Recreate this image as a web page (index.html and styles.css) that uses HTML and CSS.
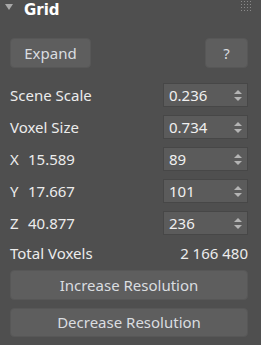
FILE: index.html
```html
<!DOCTYPE html>
<html lang="en">
  <head>
    <meta charset="UTF-8" />
    <title>Grid</title>
    <link rel="stylesheet" href="styles.css">
  </head>
  <body>
    <div class="panel">
      <div class="header">
        <span class="caret"></span>
        <span class="title">Grid</span>
        <svg class="grip" width="10" height="10" viewBox="0 0 10 10">
          <g fill="#8a8a8a">
            <rect x="0" y="0" width="1" height="1"/><rect x="3" y="0" width="1" height="1"/><rect x="6" y="0" width="1" height="1"/><rect x="9" y="0" width="1" height="1"/>
            <rect x="0" y="3" width="1" height="1"/><rect x="3" y="3" width="1" height="1"/><rect x="6" y="3" width="1" height="1"/><rect x="9" y="3" width="1" height="1"/>
            <rect x="0" y="6" width="1" height="1"/><rect x="3" y="6" width="1" height="1"/><rect x="6" y="6" width="1" height="1"/><rect x="9" y="6" width="1" height="1"/>
            <rect x="0" y="9" width="1" height="1"/><rect x="3" y="9" width="1" height="1"/><rect x="6" y="9" width="1" height="1"/><rect x="9" y="9" width="1" height="1"/>
          </g>
        </svg>
      </div>

      <div class="toolbar">
        <button class="btn expand">Expand</button>
        <button class="btn help">?</button>
      </div>

      <div class="row">
        <span class="label">Scene Scale</span>
        <div class="spin"><span>0.236</span><i class="arrows"></i></div>
      </div>
      <div class="row">
        <span class="label">Voxel Size</span>
        <div class="spin"><span>0.734</span><i class="arrows"></i></div>
      </div>
      <div class="row">
        <span class="label"><b>X</b>15.589</span>
        <div class="spin"><span>89</span><i class="arrows"></i></div>
      </div>
      <div class="row">
        <span class="label"><b>Y</b>17.667</span>
        <div class="spin"><span>101</span><i class="arrows"></i></div>
      </div>
      <div class="row">
        <span class="label"><b>Z</b>40.877</span>
        <div class="spin"><span>236</span><i class="arrows"></i></div>
      </div>

      <div class="total">
        <span class="label">Total Voxels</span>
        <span class="value">2 166 480</span>
      </div>

      <button class="btn wide">Increase Resolution</button>
      <button class="btn wide">Decrease Resolution</button>
    </div>
  </body>
</html>
```

FILE: styles.css
```css
body{
    margin: 0;
    background-color: #4f4f4f;
    font-family: 'Noto Sans', 'Open Sans', sans-serif;
    font-size: 15px;
    color: #ececec;
}
.panel{
    width: 261px;
    height: 345px;
    padding: 0 13px 0 10px;
    box-sizing: border-box;
    display: flex;
    flex-direction: column;
}
.header{
    height: 22px;
    display: flex;
    align-items: center;
    margin: 0 -5px 0 -5px;
}
.caret{
    width: 0;
    height: 0;
    border-left: 4px solid transparent;
    border-right: 4px solid transparent;
    border-top: 6px solid #a8a8a8;
    margin: 0 11px 8px 0;
}
.title{
    font-family: 'DejaVu Sans', sans-serif;
    font-weight: bold;
    font-size: 15px;
    color: #ffffff;
    flex: 1;
    margin-bottom: 1px;
}
.grip{
    margin: 0 2px 9px 0;
}
.toolbar{
    display: flex;
    justify-content: space-between;
    margin-top: 17px;
    margin-bottom: 15px;
}
.btn{
    font-family: 'Noto Sans', 'Open Sans', sans-serif;
    font-size: 15px;
    color: #dadde0;
    background-color: #5e5e5e;
    border: 1px solid #575757;
    border-radius: 4px;
    height: 30px;
    padding: 0;
}
.expand{
    width: 81px;
}
.help{
    width: 43px;
}
.row{
    display: flex;
    justify-content: space-between;
    align-items: center;
    height: 24px;
    margin-bottom: 8px;
}
.label b{
    font-weight: normal;
    display: inline-block;
    width: 18px;
}
.spin{
    width: 85px;
    height: 24px;
    box-sizing: border-box;
    background-color: #5b5b5b;
    border: 1px solid #474747;
    display: flex;
    align-items: center;
    justify-content: space-between;
    padding: 0 5px 0 5px;
    color: #f0f0f0;
}
.arrows{
    width: 8px;
    height: 11px;
    position: relative;
}
.arrows::before, .arrows::after{
    content: '';
    position: absolute;
    left: 0;
    border-left: 4px solid transparent;
    border-right: 4px solid transparent;
}
.arrows::before{
    top: 0;
    border-bottom: 4px solid #b4b4b4;
}
.arrows::after{
    bottom: 0;
    border-top: 4px solid #b4b4b4;
}
.total{
    display: flex;
    justify-content: space-between;
    align-items: center;
    height: 20px;
    margin-bottom: 7px;
}
.wide{
    width: 100%;
    margin-bottom: 8px;
}
```
